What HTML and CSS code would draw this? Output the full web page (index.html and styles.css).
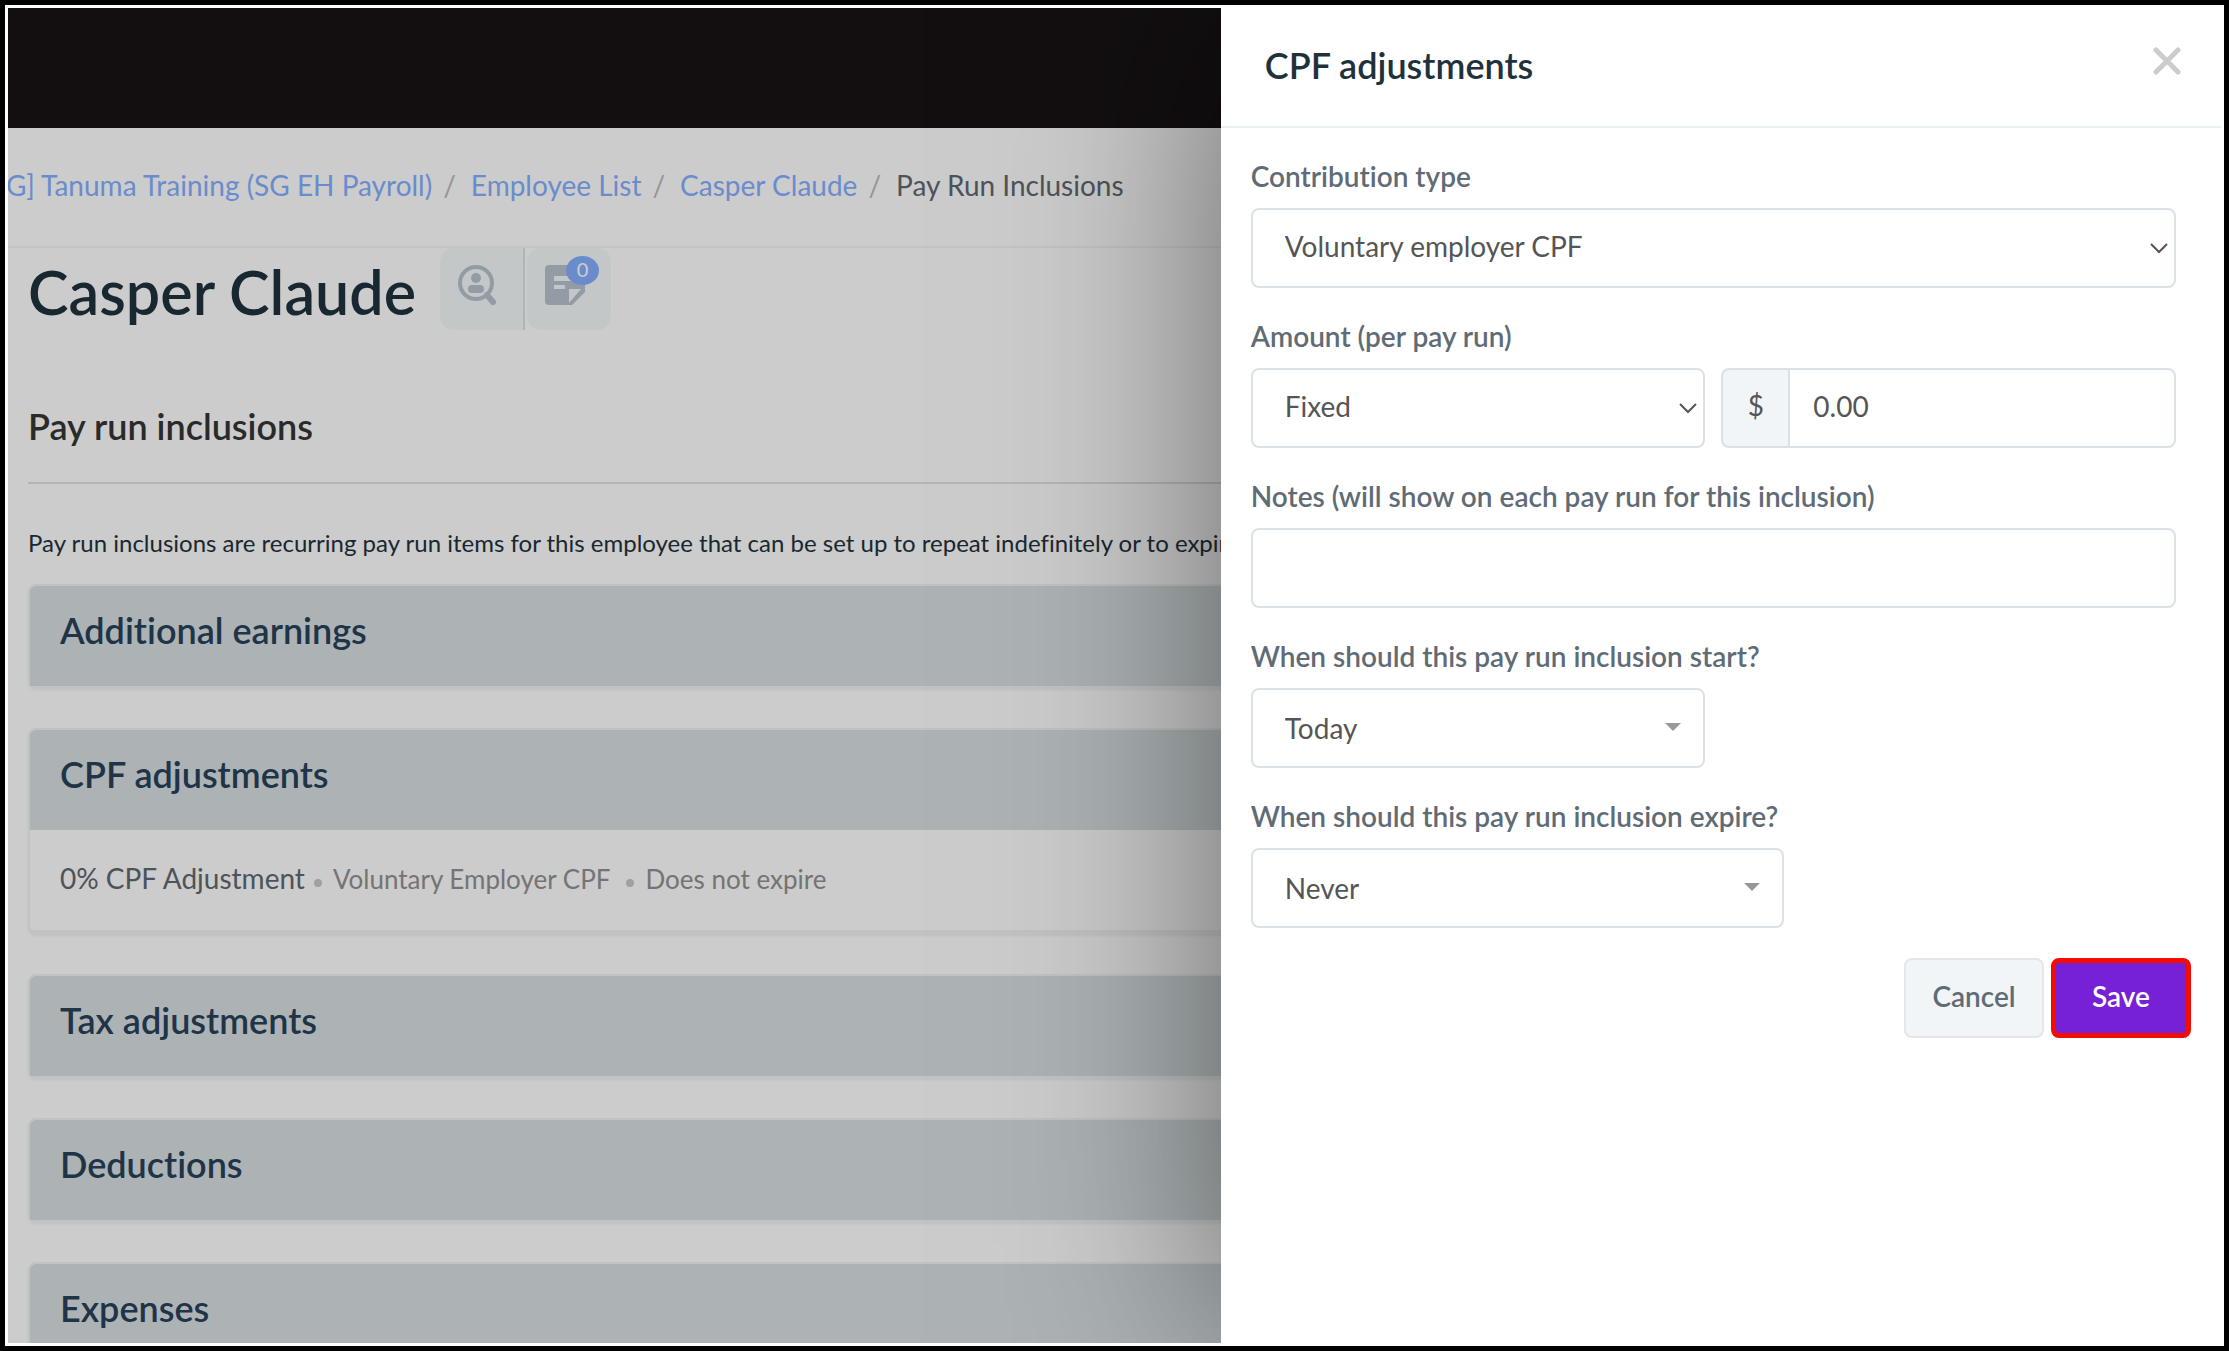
FILE: index.html
```html
<!DOCTYPE html>
<html lang="en">
<head>
    <meta charset="UTF-8">
    <meta name="viewport" content="width=device-width, initial-scale=1.0">
    <title>Pay Run Inclusions</title>
    <link rel="stylesheet" href="styles.css">
</head>
<body>
    <div class="app">
        <header class="topbar"></header>
        <nav class="breadcrumb" aria-label="Breadcrumb">
            <ol>
                <li><a href="#">G] Tanuma Training (SG EH Payroll)</a></li>
                <li><a href="#">Employee List</a></li>
                <li><a href="#">Casper Claude</a></li>
                <li class="active">Pay Run Inclusions</li>
            </ol>
        </nav>
        <main class="content">
            <div class="title-row">
                <h1>Casper Claude</h1>
                <div class="title-actions">
                    <button type="button" class="icon-btn" aria-label="View employee">
                        <svg width="40" height="42" viewBox="0 0 40 42">
                            <circle cx="18" cy="18" r="16" fill="none" stroke="currentColor" stroke-width="4"/>
                            <circle cx="18" cy="13" r="5" fill="currentColor"/>
                            <rect x="10" y="20" width="16" height="8" rx="4" fill="currentColor"/>
                            <path d="M29 30 L35 37" stroke="currentColor" stroke-width="6" stroke-linecap="round"/>
                        </svg>
                    </button>
                    <button type="button" class="icon-btn" aria-label="Notes">
                        <svg width="40" height="42" viewBox="0 0 40 42">
                            <path fill="currentColor" fill-rule="evenodd" d="M4 0 H36 Q40 0 40 4 V27 L27 40 H4 Q0 40 0 36 V4 Q0 0 4 0 Z M9 11 V16 H31 V11 Z M9 20 V24 H20 V20 Z M24 24 V38 L36 24 Z"/>
                        </svg>
                        <span class="badge">0</span>
                    </button>
                </div>
            </div>
            <h2>Pay run inclusions</h2>
            <p class="intro">Pay run inclusions are recurring pay run items for this employee that can be set up to repeat indefinitely or to expire</p>

            <section class="panel">
                <h3>Additional earnings</h3>
            </section>
            <section class="panel">
                <h3>CPF adjustments</h3>
                <div class="panel-body">
                    <span>0% CPF Adjustment</span>
                    <span class="detail">Voluntary Employer CPF</span>
                    <span class="detail">Does not expire</span>
                </div>
            </section>
            <section class="panel">
                <h3>Tax adjustments</h3>
            </section>
            <section class="panel">
                <h3>Deductions</h3>
            </section>
            <section class="panel">
                <h3>Expenses</h3>
            </section>
        </main>

        <div class="overlay"></div>

        <aside class="drawer">
            <div class="drawer-header">
                <h2>CPF adjustments</h2>
                <button type="button" class="close" aria-label="Close">
                    <svg width="28" height="28" viewBox="0 0 28 28">
                        <path d="M3 3 L25 25 M25 3 L3 25" stroke="currentColor" stroke-width="5" stroke-linecap="round"/>
                    </svg>
                </button>
            </div>
            <form class="drawer-form">
                <div class="field">
                    <label for="type">Contribution type</label>
                    <div class="select native">
                        <select id="type"><option>Voluntary employer CPF</option></select>
                        <svg width="18" height="11" viewBox="0 0 18 11"><path d="M1 1 L9 9 L17 1" fill="none" stroke="currentColor" stroke-width="2"/></svg>
                    </div>
                </div>
                <div class="field">
                    <label for="method">Amount (per pay run)</label>
                    <div class="field-row">
                        <div class="select native">
                            <select id="method"><option>Fixed</option></select>
                            <svg width="18" height="11" viewBox="0 0 18 11"><path d="M1 1 L9 9 L17 1" fill="none" stroke="currentColor" stroke-width="2"/></svg>
                        </div>
                        <div class="input-group">
                            <label class="addon" for="amount">$</label>
                            <input type="text" id="amount" value="0.00">
                        </div>
                    </div>
                </div>
                <div class="field">
                    <label for="notes">Notes (will show on each pay run for this inclusion)</label>
                    <input type="text" id="notes">
                </div>
                <div class="field">
                    <label for="start">When should this pay run inclusion start?</label>
                    <div class="select caret start">
                        <select id="start"><option>Today</option></select>
                    </div>
                </div>
                <div class="field">
                    <label for="expire">When should this pay run inclusion expire?</label>
                    <div class="select caret expire">
                        <select id="expire"><option>Never</option></select>
                    </div>
                </div>
                <div class="actions">
                    <button type="button" class="btn">Cancel</button>
                    <button type="submit" class="btn primary">Save</button>
                </div>
            </form>
        </aside>
    </div>
</body>
</html>
```
FILE: styles.css
```css
* {
    box-sizing: border-box;
}
body {
    margin: 0;
    padding: 5px;
    height: 100vh;
    background: #000;
    font-family: Lato, "Open Sans", sans-serif;
    font-size: 28px;
    line-height: 40px;
    font-variant-ligatures: none;
}
h1, h2, h3, p, ol {
    margin: 0;
    padding: 0;
}
h1, h2, h3 {
    font-weight: 600;
}
button, input, select {
    font: inherit;
}
.app {
    position: relative;
    height: 100%;
    overflow: hidden;
    border: 3px solid #fff;
    background: #fff;
}
.topbar {
    height: 120px;
    background: #181314;
}

/* breadcrumb */
.breadcrumb {
    height: 120px;
    padding-top: 37px;
    border-bottom: 2px solid #f0f5f7;
}
.breadcrumb ol {
    display: flex;
    margin-left: -2px;
    list-style: none;
    white-space: nowrap;
}
.breadcrumb li + li::before {
    content: "/";
    padding: 0 15px 0 11px;
    color: #bbb;
}
.breadcrumb a {
    color: #85b0ff;
    text-decoration: none;
}
.breadcrumb .active {
    color: #5f6970;
}

/* page */
.content {
    padding: 0 20px;
}
.title-row {
    display: flex;
    gap: 24px;
}
.title-row h1 {
    padding-top: 6px;
    font-size: 61px;
    line-height: 76px;
    color: #1f323c;
}
.title-actions {
    display: flex;
    gap: 2px;
}
.icon-btn {
    position: relative;
    display: flex;
    align-items: flex-start;
    width: 84px;
    height: 82px;
    padding: 17px 0 0 18px;
    border: none;
    border-radius: 14px;
    background: #f5f9fb;
    color: #b8c3ce;
}
.icon-btn:first-child {
    width: 85px;
    border-right: 2px solid #dde3e5;
    border-radius: 14px 0 0 14px;
}
.badge {
    position: absolute;
    top: 8px;
    left: 39px;
    width: 33px;
    height: 29px;
    border-radius: 50%;
    background: #85b0ff;
    color: #fff;
    font-size: 20px;
    line-height: 27px;
    text-align: center;
}
.content h2 {
    margin-top: 72px;
    padding-bottom: 32px;
    border-bottom: 2px solid #e2e2e2;
    font-size: 36px;
    line-height: 48px;
    color: #353535;
}
.intro {
    margin: 39px 0 21px;
    font-size: 24px;
    color: #1f323c;
    white-space: nowrap;
}
.panel {
    margin-bottom: 40px;
    border: 2px solid #f0f4f6;
    border-radius: 8px;
    box-shadow: 0 2px 3px rgba(0, 0, 0, 0.06);
}
.panel h3 {
    height: 100px;
    padding: 18px 30px;
    border-radius: 6px 6px 0 0;
    background: #d9e0e3;
    font-size: 36px;
    line-height: 52px;
    color: #29415b;
}
.panel-body {
    display: flex;
    padding: 28px 30px 30px;
    border-bottom: 2px solid #f0f2f4;
    color: #5f6970;
}
.panel-body .detail {
    font-size: 26px;
    line-height: 42px;
    color: #929292;
}
.panel-body .detail::before {
    content: "";
    display: inline-block;
    width: 8px;
    height: 8px;
    margin: 0 11px 2px 9px;
    border-radius: 50%;
    background: #c8c8c8;
}
.panel-body .detail + .detail::before {
    margin-left: 16px;
}
.overlay {
    position: absolute;
    inset: 0;
    background: rgba(0, 0, 0, 0.2);
}

/* drawer */
.drawer {
    position: absolute;
    top: 0;
    right: 0;
    bottom: 0;
    width: 45.2%;
    background: #fff;
    box-shadow: 0 0 200px rgba(0, 0, 0, 0.5);
}
.drawer-header {
    display: flex;
    justify-content: space-between;
    align-items: flex-start;
    height: 120px;
    padding: 33px 40px 0 44px;
    border-bottom: 2px solid #ebf0f3;
}
.drawer-header h2 {
    font-size: 36px;
    line-height: 48px;
    color: #1f323c;
}
.close {
    padding: 6px 0;
    border: none;
    background: none;
    color: #ccc;
}
.close svg {
    display: block;
}
.drawer-form {
    padding: 28px 45px 0 30px;
}
.field {
    margin-bottom: 28px;
    color: #5f6b75;
}
.field > label {
    display: block;
    margin-bottom: 12px;
    font-weight: 600;
}
.field select,
.field input {
    display: block;
    width: 100%;
    height: 80px;
    padding: 0 32px 4px;
    border: 2px solid #dbe2e6;
    border-radius: 8px;
    outline: none;
    background: #fff;
    color: #555;
}
.select {
    position: relative;
}
.select select {
    appearance: none;
}
.select.native svg {
    position: absolute;
    top: 35px;
    right: 8px;
    color: #555;
}
.select.caret::after {
    content: "";
    position: absolute;
    top: 35px;
    right: 24px;
    border: 8px solid transparent;
    border-top-color: #999;
    border-bottom: none;
}
.select.caret select {
    padding-bottom: 0;
}
.select.start {
    width: calc(50% - 8px);
}
.select.expire {
    width: calc(57% + 6px);
}
.field-row {
    display: grid;
    grid-template-columns: 1fr 1fr;
    gap: 16px;
}
.input-group {
    display: flex;
}
.addon {
    flex: none;
    width: 67px;
    padding-top: 15px;
    border: 2px solid #dbe2e6;
    border-right: none;
    border-radius: 8px 0 0 8px;
    background: #f1f5f8;
    color: #555;
    text-align: center;
}
.input-group input {
    flex: 1;
    min-width: 0;
    padding-left: 23px;
    border-radius: 0 8px 8px 0;
}
.actions {
    display: flex;
    justify-content: flex-end;
    gap: 7px;
    margin: 30px -15px 0 0;
}
.btn {
    width: 140px;
    height: 80px;
    padding: 0 0 4px;
    border: 2px solid #e3e7ec;
    border-radius: 8px;
    background: #f1f5f8;
    color: #5f6b75;
    font-weight: 600;
}
.btn.primary {
    border: 5px solid #f50c00;
    background: #7621d6;
    color: #fff;
}
```
